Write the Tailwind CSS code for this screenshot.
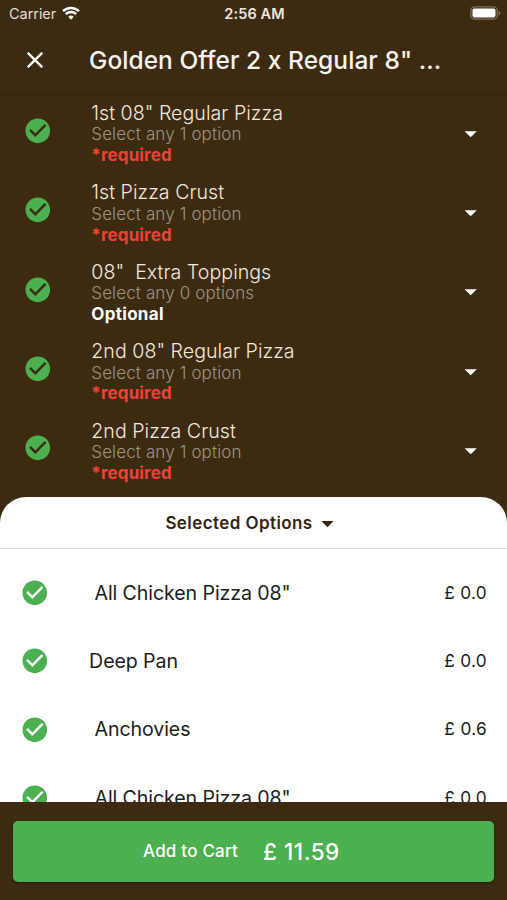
<!DOCTYPE html>
<html lang="en">
<head>
<meta charset="utf-8">
<title>Golden Offer</title>
<script src="https://cdn.jsdelivr.net/npm/@tailwindcss/browser@4"></script>
</head>
<body class="bg-[#3c2a11]">
<svg class="hidden">
  <symbol id="check" viewBox="0 0 24 24"><path d="M12 2C6.48 2 2 6.48 2 12s4.48 10 10 10 10-4.48 10-10S17.52 2 12 2zm-2 15l-5-5 1.41-1.41L10 14.17l7.59-7.59L19 8l-9 9z"/></symbol>
  <symbol id="caret" viewBox="0 0 24 24"><path d="M7 10l5 5 5-5z"/></symbol>
</svg>
<div class="relative flex h-[900px] w-[507px] flex-col overflow-hidden bg-[#3c2a11] font-['Inter','Liberation_Sans',sans-serif] whitespace-nowrap text-white">
  <div class="grid h-7 shrink-0 grid-cols-3 items-center pr-[7px] pl-[9px] text-[14.5px] leading-7">
    <div class="flex items-center gap-[6px]"><span class="tracking-[-0.05px] text-[#e6ddd2]">Carrier</span>
      <svg class="h-[14px] w-[18px] -translate-y-px" viewBox="0 0 18 14" fill="none" stroke="#fff" stroke-width="2.5"><path d="M1 5.1a11.6 11.6 0 0 1 16 0"/><path d="M3.8 8.1a7.5 7.5 0 0 1 10.4 0"/><path d="M9 13.7l-2.8-3a4.1 4.1 0 0 1 5.6 0z" fill="#fff" stroke="none"/></svg>
    </div>
    <div class="text-center font-semibold tracking-[0.1px] text-[#eee7df]">2:56 AM</div>
    <svg class="h-[14px] w-[31px] translate-x-px -translate-y-px justify-self-end" viewBox="0 0 31 14"><rect x=".8" y=".8" width="26.5" height="12.4" rx="4" fill="none" stroke="#7d705d" stroke-width="1.3"/><rect x="2.5" y="2.5" width="23" height="9" rx="2" fill="#fff"/><path d="M28.7 4.8v4.6q1.8-.8 1.8-2.3t-1.8-2.3z" fill="#7d705d"/></svg>
  </div>
  <div class="flex h-[66px] shrink-0 items-center border-b border-[#35240e] pb-px pl-[27px] shadow-[0_1px_1px_#2f1f0a60]">
    <svg class="h-4 w-4 shrink-0" viewBox="0 0 16 16" stroke="#fff" stroke-width="2.3"><path d="M0.7 0.7l14.6 14.6M15.3 0.7L0.7 15.3"/></svg>
    <span class="ml-[46px] text-[24.5px] leading-8 font-medium tracking-[0.06px] text-[#fbf4ec]">Golden Offer 2 x Regular 8" ...</span>
  </div>
  <div id="groups" class="-mt-[3px] flex h-[406px] shrink-0 flex-col"></div>
  <div class="flex h-[305px] shrink-0 flex-col overflow-hidden rounded-t-[26px] bg-white text-[#1c1c1c]">
    <div class="flex h-[52px] shrink-0 items-center justify-center border-b border-[#dedede] pt-[2px] text-[#35240e]">
      <span class="text-[17px] font-semibold tracking-[0.42px]">Selected Options</span>
      <svg class="h-[29px] w-[29px]" fill="#35240e"><use href="#caret"/></svg>
    </div>
    <div id="picked" class="flex flex-col pt-[9.4px]"></div>
  </div>
  <div class="flex flex-1 items-start bg-[#3c2a11] px-[13px] pt-[19px]">
    <button class="flex h-[61px] w-[482px] items-center rounded-[5px] bg-[#4caf50] pl-[130px] text-left font-medium shadow-[0_1px_2px_#0005]">
      <span class="w-[120px] text-[17px] tracking-[0.22px]">Add to Cart</span><span class="text-[22.5px] tracking-[0.5px]">£ 11.59</span>
    </button>
  </div>
</div>
<script>
const groups = [
  ['1st 08" Regular Pizza', 'Select any 1 option', '*required'],
  ['1st Pizza Crust', 'Select any 1 option', '*required'],
  ['08"  Extra Toppings', 'Select any 0 options', 'Optional'],
  ['2nd 08" Regular Pizza', 'Select any 1 option', '*required'],
  ['2nd Pizza Crust', 'Select any 1 option', '*required'],
];
document.getElementById('groups').innerHTML = groups.map(([title, hint, rule]) => `
<div class="flex h-[79.4px] shrink-0 items-center pr-[22px] pl-[22.5px]">
<svg class="h-[29.6px] w-[29.6px]" fill="#4caf50"><use href="#check"/></svg>
<div class="ml-[39.2px] flex-1 pt-[6px]">
<div class="h-[22.4px] text-[19.6px] leading-[22px] font-[350] tracking-[0.03px] whitespace-pre text-[#f4e9dc]">${title}</div>
<div class="h-[20.8px] text-[17px] leading-[21px] font-[350] tracking-[0.12px] text-[#a09483]">${hint}</div>
<div class="h-[20px] text-[17px] leading-[20px] font-bold ${rule === 'Optional' ? 'tracking-[0.3px] text-white' : 'tracking-[0.13px] text-[#ee4237]'}">${rule}</div>
</div>
<svg class="mt-[5.4px] h-[29.4px] w-[29.4px]" fill="#fff"><use href="#caret"/></svg>
</div>`).join('');
const picked = [
  [' All Chicken Pizza 08"', '£ 0.0'], ['Deep Pan', '£ 0.0'],
  [' Anchovies', '£ 0.6'], [' All Chicken Pizza 08"', '£ 0.0'],
];
document.getElementById('picked').innerHTML = picked.map(([name, price]) => `
<div class="flex h-[68.4px] shrink-0 items-center pr-[20px] pl-5">
<svg class="h-[29.6px] w-[29.6px]" fill="#4caf50"><use href="#check"/></svg>
<div class="ml-[39.5px] flex-1 text-[19.6px] leading-6 tracking-[-0.1px] whitespace-pre">${name}</div>
<span class="text-[17.3px] leading-6 tracking-[0.3px]">${price}</span>
</div>`).join('');
</script>
</body>
</html>
